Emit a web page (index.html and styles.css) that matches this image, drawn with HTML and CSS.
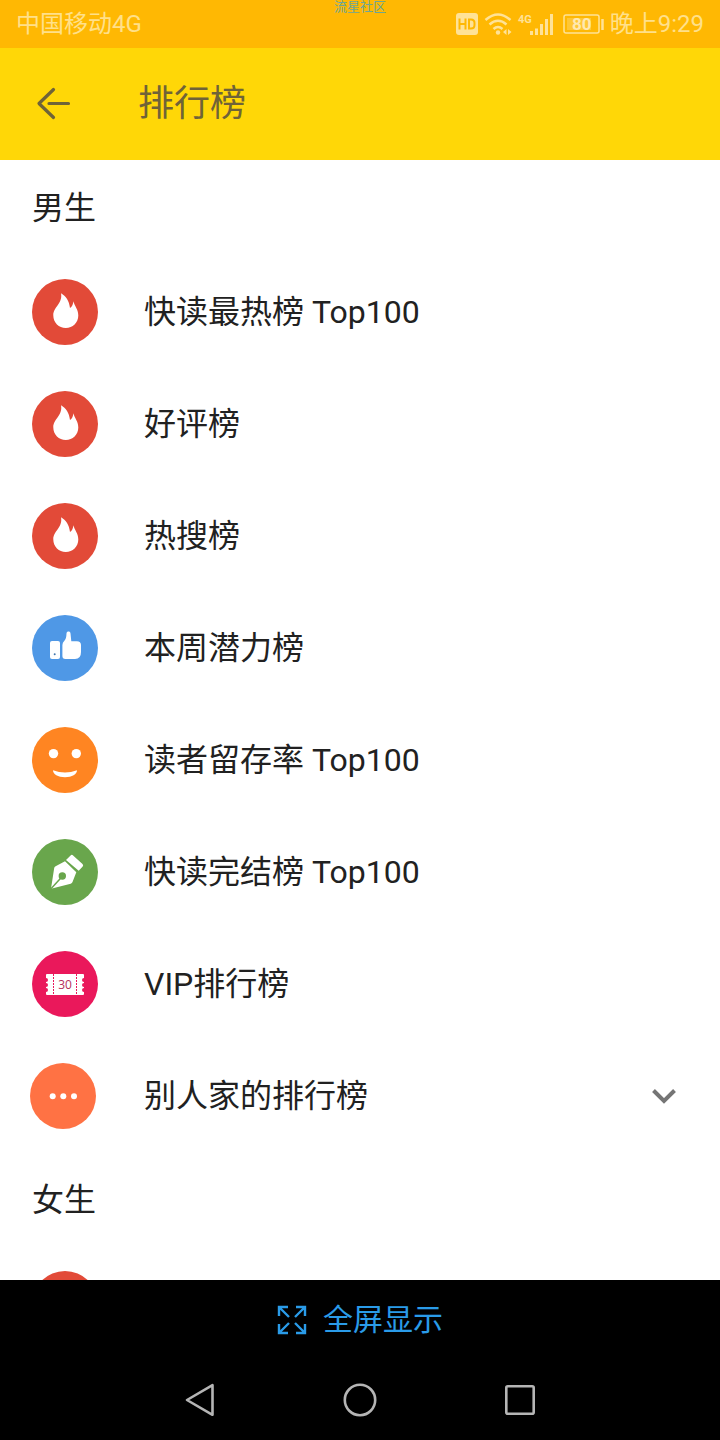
FILE: index.html
```html
<!DOCTYPE html>
<html lang="zh-CN">
<head>
<meta charset="utf-8">
<meta name="viewport" content="width=device-width, initial-scale=1">
<title>排行榜</title>
<link rel="stylesheet" href="styles.css">
</head>
<body>
<svg class="defs" aria-hidden="true">
  <symbol id="fire" viewBox="0 0 66 66">
    <circle cx="33" cy="33" r="33" fill="#e24a38"/>
    <path fill="#fff" d="M29 14.300c5 3 8.200 7.700 9 14.700 1.900-1.300 3.100-3.300 3.400-6.800 1.200 5 4.900 8 4.900 14.200 0 7-5.600 12.500-12.500 12.500s-12.500-5.500-12.500-12.500c0-8.400 9.700-12 7.700-22.100z"/>
  </symbol>
</svg>
<header class="status">
  <span>中国移动4G</span>
  <span class="watermark">流星社区</span>
  <div class="indicators">
    <svg width="152" height="28" viewBox="0 0 152 28" aria-hidden="true">
      <rect x="0" y="3" width="22" height="22" rx="3" fill="#ffe297"/>
      <path d="M3.500 8.500v11M9.500 8.500v11M3.500 14h6M13 9.500v9h2q3.500 0 3.500-3.500v-2q0-3.500-3.500-3.500z" fill="none" stroke="#ffb803" stroke-width="2"/>
      <g fill="none" stroke="#ffe297" stroke-width="2.500">
        <path d="M29.500 10q12.500-11 25 0M33.500 14.500q8.500-7.500 17 0M37.500 19q4.500-4 9 0"/>
      </g>
      <circle cx="42" cy="22.500" r="2.200" fill="#ffe297"/>
      <path d="M50.500 19v6l-3.500-3zM52 19v6l3.500-3z" fill="#ffe297"/>
      <text x="62" y="13" class="tiny">4G</text>
      <path d="M75.500 21v4M80.500 18.500v6.500M85.500 14v11M90.500 9v16M95.500 4v21" stroke="#ffe297" stroke-width="3"/>
      <rect x="108" y="5" width="35" height="18" rx="2" fill="none" stroke="#ffe297" stroke-width="1.500"/>
      <rect x="111" y="8" width="24" height="12" fill="#ffe297" opacity=".35"/>
      <path d="M146.500 9v11" stroke="#ffe297" stroke-width="2.500"/>
      <text x="116" y="20" class="charge">80</text>
    </svg>
    <span>晚上9:29</span>
  </div>
</header>
<div class="appbar">
  <button class="back" type="button" aria-label="返回">
    <svg width="40" height="40" viewBox="0 0 40 40" fill="none" stroke="#6f6338" stroke-width="3.200" stroke-linecap="round" stroke-linejoin="round"><path d="M19.500 5.500L5 19.500 19.500 33.500M15 19.500h19.500"/></svg>
  </button>
  <h1>排行榜</h1>
</div>
<main class="content">
  <h2>男生</h2>
  <a class="row" href="#"><svg class="icon"><use href="#fire"/></svg><span>快读最热榜 Top100</span></a>
  <a class="row" href="#"><svg class="icon"><use href="#fire"/></svg><span>好评榜</span></a>
  <a class="row" href="#"><svg class="icon"><use href="#fire"/></svg><span>热搜榜</span></a>
  <a class="row" href="#">
    <svg class="icon" viewBox="0 0 66 66">
      <circle cx="33" cy="33" r="33" fill="#4f98e6"/>
      <rect x="18" y="26" width="10" height="18" rx="2" fill="#fff"/>
      <circle cx="22.700" cy="39.300" r="1" fill="#4177ae"/>
      <path fill="#fff" d="M34.500 18.500c.2-2.600 3.800-2.600 4 0l.8 7.700h5.600q4.100 0 4.100 3.800v7q0 7-6 7h-9.700q-2.900 0-2.900-3V30q0-2.500 2-4.200 2-2 2.100-7.300z"/>
    </svg><span>本周潜力榜</span></a>
  <a class="row" href="#">
    <svg class="icon" viewBox="0 0 66 66">
      <circle cx="33" cy="33" r="33" fill="#ff8522"/>
      <circle cx="21.500" cy="26.600" r="4.700" fill="#fff"/>
      <circle cx="44.300" cy="26.600" r="4.700" fill="#fff"/>
      <path fill="#fff" d="M21 43.200q12 4.400 24 0c0 3.800-5 7-12 7s-12-3.200-12-7z"/>
    </svg><span>读者留存率 Top100</span></a>
  <a class="row" href="#">
    <svg class="icon" viewBox="0 0 66 66">
      <circle cx="33" cy="33" r="33" fill="#69a64c"/>
      <path fill="#fff" d="M19 49.700l3.200-20.700q.2-1.300 1.400-1.700L33 22.300l11.300 11-3.800 9.700q-.4 1.300-1.800 1.700zM34 21l4.600-4.600q1.200-1.100 2.500 0l9.400 8.600q1.200 1.200.2 2.500l-4 4.300z"/>
      <path d="M19 49.700l11-12" stroke="#69a64c" stroke-width="1.500"/>
      <circle cx="30.300" cy="37" r="3.700" fill="#69a64c"/>
    </svg><span>快读完结榜 Top100</span></a>
  <a class="row" href="#">
    <svg class="icon" viewBox="0 0 66 66">
      <circle cx="33" cy="33" r="33" fill="#ea185b"/>
      <path fill="#fff" d="M15 23h36q1 0 1 1v3a2 2 0 0 0 0 4v1a2 2 0 0 0 0 4v1a2 2 0 0 0 0 4v2q0 1-1 1H15q-1 0-1-1v-2a2 2 0 0 0 0-4v-1a2 2 0 0 0 0-4v-1a2 2 0 0 0 0-4v-3q0-1 1-1z"/>
      <path d="M21.500 23v21M44.500 23v21" stroke="#ea185b" stroke-dasharray="2 1"/>
      <text x="33" y="38" class="ticket">30</text>
    </svg><span>VIP排行榜</span></a>
  <button class="row row-more" type="button" aria-expanded="false">
    <svg class="icon" viewBox="0 0 66 66">
      <circle cx="33" cy="33" r="33" fill="#ff7244"/>
      <g fill="#fff"><circle cx="22.700" cy="33.300" r="3"/><circle cx="33.300" cy="33.300" r="3"/><circle cx="44" cy="33.300" r="3"/></g>
    </svg><span>别人家的排行榜</span>
    <svg class="chevron" width="24" height="24" viewBox="0 0 24 24" fill="none" stroke="#757575" stroke-width="4"><path d="M1.500 6.500L12 17 22.500 6.500"/></svg>
  </button>
  <h2>女生</h2>
  <a class="row" href="#"><svg class="icon"><use href="#fire"/></svg></a>
</main>
<button class="fullscreen" type="button">
  <svg width="30" height="30" viewBox="0 0 30 30" fill="none" stroke="#2a9be8" stroke-width="2.400" aria-hidden="true"><path d="M2 11V2h9M2 2l10 10M19 2h9v9M28 2L18 12M2 19v9h9M2 28l10-10M28 19v9h-9M28 28L18 18"/></svg>
  <span>全屏显示</span>
</button>
<nav class="system">
  <button type="button" aria-label="返回"><svg width="40" height="40" viewBox="0 0 40 40"><path d="M7 20L32.500 5.200v29.600z"/></svg></button>
  <button type="button" aria-label="主页"><svg width="40" height="40" viewBox="0 0 40 40"><circle cx="20" cy="20" r="15.200"/></svg></button>
  <button type="button" aria-label="最近任务"><svg width="40" height="40" viewBox="0 0 40 40"><rect x="6.300" y="6.300" width="27.400" height="27.400" rx="1.500"/></svg></button>
</nav>
</body>
</html>
```
FILE: styles.css
```css
* {
  box-sizing: border-box;
}

body {
  display: flex;
  flex-direction: column;
  height: 100vh;
  margin: 0;
  background: #fff;
  color: #212121;
  font-family: Roboto, "Noto Sans CJK SC", sans-serif;
  line-height: 1;
}

button {
  padding: 0;
  border: 0;
  background: none;
  color: inherit;
  font: inherit;
}

svg {
  display: block;
  flex: none;
}

.defs {
  position: absolute;
  width: 0;
  height: 0;
}

.status {
  position: relative;
  display: flex;
  flex: none;
  align-items: center;
  justify-content: space-between;
  height: 48px;
  padding: 0 16px;
  background: #ffb803;
  color: #ffe08a;
  font-size: 24px;
}

.watermark {
  position: absolute;
  top: 0;
  left: 50%;
  transform: translateX(-50%);
  color: #6ca596;
  font-size: 13px;
}

.indicators {
  display: flex;
  align-items: center;
  gap: 2px;
}

.tiny {
  fill: #ffe297;
  font-size: 11px;
  font-weight: 700;
}

.charge {
  fill: #ffe9b0;
  font-size: 17px;
  font-weight: 700;
}

.appbar {
  display: flex;
  flex: none;
  align-items: center;
  gap: 64px;
  height: 112px;
  padding: 0 34px;
  background: #ffd707;
  color: #6f6338;
}

h1,
h2 {
  margin: 0;
  font-weight: 400;
}

h1 {
  font-size: 36px;
}

.content {
  flex: 1;
  min-height: 0;
  overflow: hidden;
}

h2 {
  padding: 0 32px;
  font-size: 32px;
  line-height: 96px;
}

.row {
  display: flex;
  align-items: center;
  gap: 46px;
  width: 100%;
  height: 112px;
  padding: 0 32px;
  color: inherit;
  font-size: 32px;
  text-align: left;
  text-decoration: none;
}

.row-more {
  gap: 48px;
  padding: 0 44px 0 30px;
}

.icon {
  width: 66px;
  height: 66px;
}

.ticket {
  fill: #b5305c;
  font-family: "Open Sans", sans-serif;
  font-size: 12px;
  text-anchor: middle;
}

.chevron {
  margin-left: auto;
}

.fullscreen {
  display: flex;
  flex: none;
  align-items: center;
  justify-content: center;
  gap: 16px;
  height: 80px;
  background: #000;
  color: #2a9be8;
  font-size: 30px;
}

.system {
  display: flex;
  flex: none;
  align-items: center;
  justify-content: center;
  gap: 120px;
  height: 80px;
  background: #000;
}

.system svg {
  fill: none;
  stroke: #b5b5b5;
  stroke-width: 2.6px;
  stroke-linejoin: round;
}
```
